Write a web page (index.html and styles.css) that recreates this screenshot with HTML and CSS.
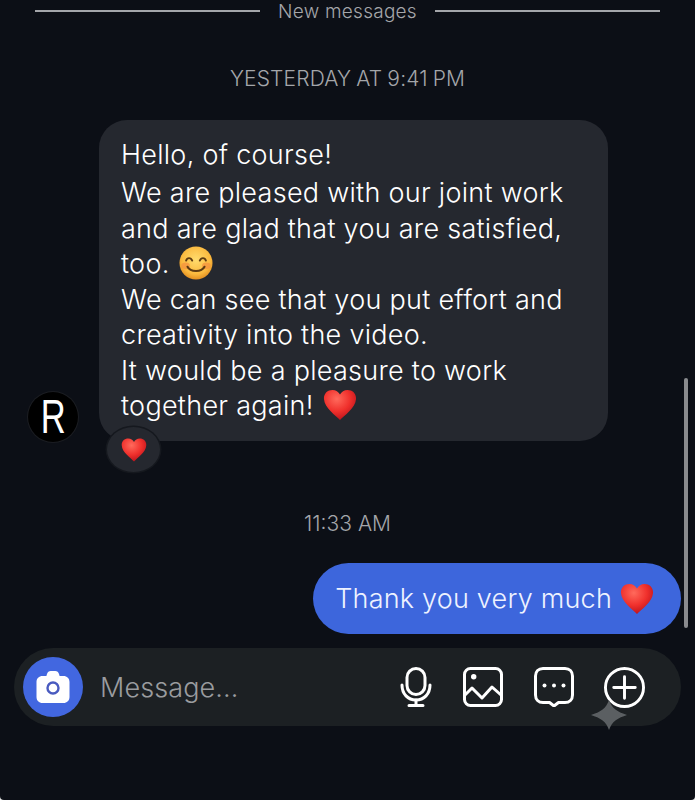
FILE: index.html
```html
<!DOCTYPE html>
<html lang="en">
<head>
<meta charset="utf-8">
<title>Messages</title>
<link rel="stylesheet" href="styles.css">
</head>
<body>
<svg class="defs" width="0" height="0" aria-hidden="true">
  <defs>
    <radialGradient id="heartFill" cx="40%" cy="30%" r="75%">
      <stop offset="0" stop-color="#ff6a5c"/>
      <stop offset=".55" stop-color="#f0302c"/>
      <stop offset="1" stop-color="#b5101a"/>
    </radialGradient>
    <radialGradient id="smileFill" cx="50%" cy="40%" r="62%">
      <stop offset="0" stop-color="#ffdc6e"/>
      <stop offset=".7" stop-color="#fbb93e"/>
      <stop offset="1" stop-color="#e08a1e"/>
    </radialGradient>
    <symbol id="heart" viewBox="0 0 36 36">
      <path d="M18 34C14 29.500 1.500 21.500 1 11.500 .7 5.500 5 2 10 2c3.600 0 6.400 1.800 8 4.800C19.600 3.800 22.400 2 26 2c5 0 9.300 3.500 9 9.500C34.500 21.500 22 29.500 18 34z" fill="url(#heartFill)"/>
    </symbol>
    <symbol id="smile" viewBox="0 0 36 36">
      <circle cx="18" cy="18" r="17.500" fill="url(#smileFill)"/>
      <ellipse cx="7" cy="21" rx="4.500" ry="3.500" fill="#f4913f" opacity=".75"/>
      <ellipse cx="29" cy="21" rx="4.500" ry="3.500" fill="#f4913f" opacity=".75"/>
      <path d="M7.500 15.500c1.200-3.500 5-3.500 6.500 0M22 15.500c1.500-3.500 5.300-3.500 6.500 0" fill="none" stroke="#5d3a12" stroke-width="2" stroke-linecap="round"/>
      <path d="M9 22c3 6 15 6 18 0" fill="none" stroke="#5d3a12" stroke-width="2.200" stroke-linecap="round"/>
    </symbol>
  </defs>
</svg>

<main class="chat">
  <div class="divider">
    <span class="divider-line"></span>
    <span class="divider-label">New messages</span>
    <span class="divider-line"></span>
  </div>

  <p class="stamp stamp-first">YESTERDAY AT 9:41 PM</p>

  <section class="incoming">
    <div class="avatar"><span class="avatar-letter">R</span></div>
    <div class="bubble-wrap">
      <div class="bubble bubble-in">
        <p class="greeting">Hello, of course!</p>
        <p>We are pleased with our joint work<br>and are glad that you are satisfied,<br>too. <svg class="emoji"><use href="#smile"/></svg></p>
        <p>We can see that you put effort and<br>creativity into the video.</p>
        <p>It would be a pleasure to work<br>together again! <svg class="emoji"><use href="#heart"/></svg></p>
      </div>
      <div class="reaction"><svg class="reaction-heart"><use href="#heart"/></svg></div>
    </div>
  </section>

  <p class="stamp stamp-second">11:33 AM</p>

  <section class="outgoing">
    <div class="bubble bubble-out">Thank you very much <svg class="emoji"><use href="#heart"/></svg></div>
  </section>

  <form class="composer">
    <span class="camera">
      <svg width="36" height="36" viewBox="0 0 36 36">
        <path d="M12 5c.6-1.800 1.800-3 3.800-3h4.400c2 0 3.200 1.200 3.800 3l.6 2h3.900c3.500 0 6 2.500 6 6v15c0 3.500-2.500 6-6 6H7.500c-3.500 0-6-2.500-6-6V13c0-3.500 2.500-6 6-6h3.900z" fill="#fff"/>
        <circle cx="18" cy="19" r="5.500" fill="none" stroke="#4a5bc0" stroke-width="2.400"/>
      </svg>
    </span>
    <span class="placeholder">Message...</span>
    <span class="tools">
      <svg class="tool tool-mic" viewBox="0 0 32 40" fill="none" stroke="#fff" stroke-width="3" stroke-linecap="round">
        <rect x="7" y="1.500" width="18" height="26" rx="9"/>
        <path d="M2 18c0 9 6 15 14 15s14-6 14-15"/>
        <path d="M16 33v5M9 38.500h14"/>
      </svg>
      <svg class="tool tool-image" viewBox="0 0 40 40" fill="none" stroke="#fff" stroke-width="3" stroke-linejoin="round">
        <rect x="1.500" y="1.500" width="37" height="37" rx="6"/>
        <circle cx="10.700" cy="9.700" r="2.700" fill="#fff" stroke="none"/>
        <path d="M2 28l7-7 10 10 10-11 9 8" stroke-linecap="round"/>
      </svg>
      <svg class="tool tool-chat" viewBox="0 0 40 40" fill="none" stroke="#fff" stroke-width="3" stroke-linejoin="round">
        <path d="M9 1.500h22c4.500 0 7.500 3 7.500 7.500v19c0 4.500-3 7.500-7.500 7.500h-6.500L20 39l-4.500-3.500H9c-4.500 0-7.500-3-7.500-7.500V9C1.500 4.500 4.500 1.500 9 1.500z"/>
        <circle cx="10.500" cy="18.500" r="2" fill="#fff" stroke="none"/>
        <circle cx="20" cy="18.500" r="2" fill="#fff" stroke="none"/>
        <circle cx="29.500" cy="18.500" r="2" fill="#fff" stroke="none"/>
      </svg>
      <svg class="tool tool-plus" viewBox="0 0 42 42" fill="none" stroke="#fff" stroke-width="3" stroke-linecap="round">
        <circle cx="21" cy="21" r="19.500"/>
        <path d="M21 10v22M10 21h22"/>
      </svg>
    </span>
    <svg class="sparkle" viewBox="0 0 36 30"><path d="M18 0C21 9 27 12 36 15 27 18 21 21 18 30 15 21 9 18 0 15 9 12 15 9 18 0z" fill="#5b5f62"/></svg>
  </form>

  <div class="scrollbar"></div>
</main>
</body>
</html>
```
FILE: styles.css
```css
html {
  background: #e8e8e8;
}

body {
  margin: 0;
  height: 800px;
  overflow: hidden;
  background: #0c0f16;
  border-radius: 0 0 4px 4px;
  font-family: "Inter", "Liberation Sans", sans-serif;
  color: #fff;
}

.defs {
  position: absolute;
}

.chat {
  position: relative;
  height: 800px;
  display: flex;
  flex-direction: column;
}

.divider {
  display: flex;
  align-items: center;
  gap: 18px;
  padding: 0 35px;
  height: 22px;
}

.divider-line {
  flex: 1;
  height: 1.500px;
  background: #a4a6aa;
}

.divider-label {
  margin-top: 2px;
  font-size: 19px;
  font-weight: 300;
  letter-spacing: .25px;
  color: #a4a6aa;
  line-height: 22px;
}

.stamp {
  margin: 0;
  text-align: center;
  font-weight: 300;
  color: #a4a6aa;
  line-height: 24px;
}

.stamp-first {
  margin-top: 45px;
  font-size: 21px;
  letter-spacing: .15px;
  word-spacing: -1px;
}

.stamp-second {
  margin-top: 70px;
  font-size: 21px;
}

.incoming {
  display: flex;
  align-items: flex-start;
  margin-top: 29px;
  padding-left: 28px;
}

.avatar {
  width: 50px;
  height: 50px;
  margin-top: 272px;
  margin-right: 21px;
  flex: none;
  display: flex;
  align-items: center;
  justify-content: center;
  background: #000;
  border-radius: 50%;
  box-shadow: 0 0 0 1px #1b1d22;
}

.avatar-letter {
  font-family: "Liberation Sans", sans-serif;
  font-size: 48px;
  line-height: 50px;
  transform: scaleX(.72);
}

.bubble-wrap {
  position: relative;
  width: 509px;
  height: 321px;
}

.bubble {
  font-size: 27px;
  font-weight: 300;
  line-height: 35.500px;
}

.bubble p {
  margin: 0;
}

.bubble-in {
  height: 321px;
  box-sizing: border-box;
  padding: 17px 22px 0;
  background: #25282f;
  border-radius: 28px;
  letter-spacing: .28px;
}

.bubble .greeting {
  margin-bottom: 2.500px;
}

.emoji {
  width: 34px;
  height: 34px;
  vertical-align: -7px;
  margin-left: 2px;
}

.reaction {
  position: absolute;
  left: 8px;
  top: 307px;
  width: 53px;
  height: 45px;
  display: flex;
  align-items: center;
  justify-content: center;
  background: #25282f;
  border-radius: 50%;
  box-shadow: 0 0 0 1.500px #15181e;
}

.reaction-heart {
  width: 26px;
  height: 26px;
}

.outgoing {
  display: flex;
  justify-content: flex-end;
  margin-top: 27px;
  padding-right: 14px;
}

.bubble-out {
  display: flex;
  align-items: center;
  gap: 6px;
  height: 71px;
  padding: 0 27px 0 22px;
  background: #3d66dc;
  border-radius: 36px;
  color: #eef2ff;
  letter-spacing: .2px;
}

.composer {
  position: relative;
  display: flex;
  align-items: center;
  margin: 14px 14px 0;
  height: 78px;
  padding-left: 9px;
  background: #1c2023;
  border-radius: 39px;
}

.camera {
  width: 60px;
  height: 60px;
  flex: none;
  display: flex;
  align-items: center;
  justify-content: center;
  background: #4267e0;
  border-radius: 50%;
}

.placeholder {
  margin-left: 17px;
  flex: 1;
  font-size: 27px;
  font-weight: 300;
  letter-spacing: .1px;
  color: #9a9c9f;
}

.tools {
  display: flex;
  align-items: center;
  gap: 30px;
  margin-right: 36px;
}

.tool {
  height: 40px;
  flex: none;
}

.tool-mic {
  width: 32px;
  margin-right: 1px;
}

.tool-image {
  width: 40px;
}

.tool-chat {
  width: 40px;
  margin-left: 1px;
}

.tool-plus {
  width: 41px;
  height: 41px;
}

.sparkle {
  position: absolute;
  left: 577px;
  top: 52px;
  width: 36px;
  height: 30px;
}

.scrollbar {
  position: absolute;
  left: 684px;
  top: 378px;
  width: 4px;
  height: 250px;
  background: #8a8b8e;
  border-radius: 2px;
}
```
